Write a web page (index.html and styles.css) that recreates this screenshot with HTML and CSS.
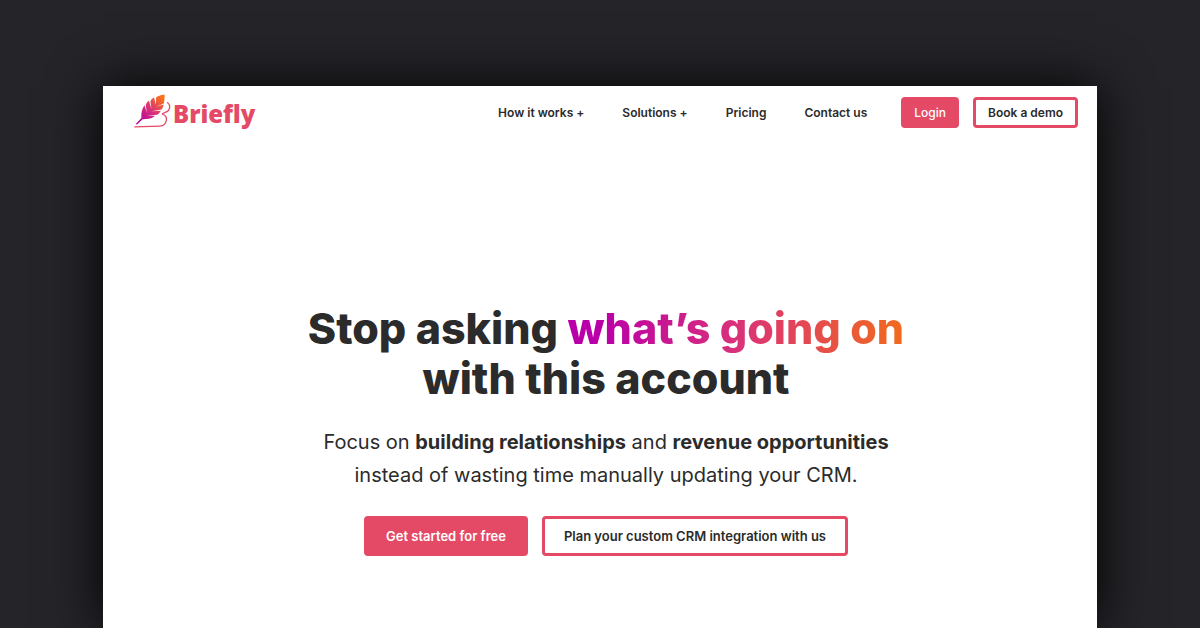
FILE: index.html
```html
<!DOCTYPE html>
<html lang="en">
<head>
<meta charset="utf-8">
<meta name="viewport" content="width=device-width, initial-scale=1">
<title>Briefly</title>
<link rel="stylesheet" href="styles.css">
</head>
<body>
<div class="page">
  <header class="header">
    <a class="logo" href="#">
      <svg class="logo-mark" viewBox="0 0 36 36" aria-hidden="true">
        <defs>
          <linearGradient id="feather" gradientUnits="userSpaceOnUse" x1="6" y1="28" x2="28" y2="4">
            <stop offset="0" stop-color="#b5009f"/>
            <stop offset="0.5" stop-color="#d9317a"/>
            <stop offset="1" stop-color="#f97316"/>
          </linearGradient>
        </defs>
        <path fill="none" stroke="#e44a66" stroke-width="1.3" stroke-linecap="round" stroke-linejoin="round" d="M32.700 8.500C35.200 10.200 35.200 13.500 33.800 15.600C32.300 18 29.200 17.600 27.500 19.500C31.800 20.500 32.600 24.500 30.700 28C29.400 30.500 27.500 31.200 25 31.300L0.800 32"/>
        <path fill="url(#feather)" d="M29.700 0.500C25.500 1 23 2 21.500 3.500L21.400 10.500L19.500 3.500C17.500 4.500 16.500 5.500 16 7.500L17 14.500L14.500 6.500C12.500 7.500 11.500 9.500 11.500 11.500L12.600 18.300L10.200 11C8 14 6.800 18 7.200 23.300L1.500 29.500L3 29.700L8.400 24.500C13 24.600 18.500 23.800 20.500 21.200L12.400 20.800L22.500 20.200C24.500 19 25.500 17.500 26 16.200L17 16.700L26.900 15C28 13.500 28.600 12 28.800 10.300L21.300 12.300L29 9.300C29.700 6 29.900 3 29.700 0.500Z"/>
      </svg>
      <span class="logo-name">Briefly</span>
    </a>
    <nav class="nav">
      <a class="nav-link" href="#">How it works +</a>
      <a class="nav-link" href="#">Solutions +</a>
      <a class="nav-link" href="#">Pricing</a>
      <a class="nav-link" href="#">Contact us</a>
    </nav>
    <div class="account">
      <button class="button button-solid" type="button">Login</button>
      <button class="button button-outline" type="button">Book a demo</button>
    </div>
  </header>
  <main class="hero">
    <h1 class="title">Stop asking <span class="title-accent">what’s going on</span><br>with this account</h1>
    <p class="lead">Focus on <strong>building relationships</strong> and <strong>revenue opportunities</strong><br>instead of wasting time manually updating your CRM.</p>
    <div class="actions">
      <button class="button button-solid button-large" type="button">Get started for free</button>
      <button class="button button-outline button-large" type="button">Plan your custom CRM integration with us</button>
    </div>
  </main>
</div>
</body>
</html>
```
FILE: styles.css
```css
* {
  box-sizing: border-box;
}

body {
  margin: 0;
  min-height: 100vh;
  display: flex;
  padding: 86px 103px 0;
  background: #252429;
  color: #2b2b2b;
  font-family: Inter, "Liberation Sans", sans-serif;
}

.page {
  flex: 1;
  background: #fff;
  box-shadow: 0 0 50px #000;
}

.header {
  display: flex;
  align-items: center;
  padding: 8px 19px 8px 31px;
}

.logo {
  display: flex;
  align-items: center;
  gap: 2px;
  margin-right: auto;
  text-decoration: none;
}

.logo-mark {
  width: 37px;
  height: 37px;
}

.logo-name {
  color: #e44a66;
  font: 900 24px/32px "Noto Sans", sans-serif;
  padding-top: 3px;
}

.nav {
  display: flex;
  gap: 38px;
  margin-right: 34px;
}

.nav-link {
  color: #2b2b2b;
  font-size: 12px;
  font-weight: 600;
  line-height: 16px;
  text-decoration: none;
}

.account {
  display: flex;
  gap: 14px;
}

.button {
  padding: 5px 10px;
  border: 3px solid #e44a66;
  border-radius: 4px;
  font: 500 12px/15px Inter, sans-serif;
  cursor: pointer;
}

.button-solid {
  background: #e44a66;
  color: #fff;
}

.button-outline {
  background: #fff;
  color: #2b2b2b;
  font-weight: 600;
  padding-inline: 12px;
}

.button-large {
  padding: 8px 19px;
  font-size: 13px;
  font-weight: 600;
  line-height: 18px;
}

.hero {
  padding: 164px 0 72px 12px;
  text-align: center;
}

.title {
  margin: 0;
  font-size: 43px;
  font-weight: 800;
  line-height: 50px;
}

.title-accent {
  background: linear-gradient(90deg, #b900a8 10%, #d9317a 50%, #f26a1b);
  background-clip: text;
  -webkit-background-clip: text;
  color: transparent;
}

.lead {
  margin: 23px 0 24px;
  font-size: 20px;
  line-height: 33px;
}

.actions {
  display: flex;
  justify-content: center;
  gap: 14px;
}
```
